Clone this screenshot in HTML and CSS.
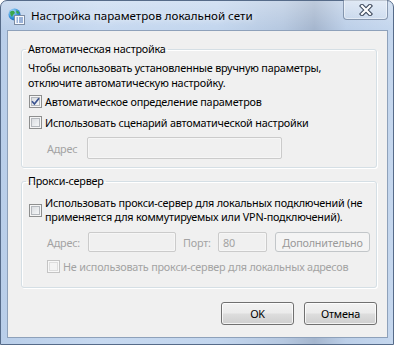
FILE: index.html
```html
<!DOCTYPE html>
<html lang="ru">
<head>
<meta charset="utf-8">
<title>Настройка параметров локальной сети</title>
<link rel="stylesheet" href="styles.css">
</head>
<body>
<div class="window">
  <div class="titlebar">
    <svg class="app-icon" width="17" height="17" viewBox="0 0 17 17">
      <defs>
        <radialGradient id="gl" cx="0.35" cy="0.3" r="0.8">
          <stop offset="0" stop-color="#bfe6ff"/>
          <stop offset="0.6" stop-color="#2f8fd8"/>
          <stop offset="1" stop-color="#1a5fa8"/>
        </radialGradient>
      </defs>
      <circle cx="6.5" cy="6.5" r="6" fill="url(#gl)"/>
      <path d="M2 4 Q4 2 6 3 L7 5 L5 7 L4 9 L2.5 7 Z" fill="#3aa64a"/>
      <path d="M8 2.5 Q10 2.5 11.5 4.5 L10 6 L8.5 5 Z" fill="#3aa64a"/>
      <rect x="6.5" y="7.5" width="10" height="9" fill="#f7f9fc" stroke="#7d8ca3"/>
      <path d="M8.5 10h1.5M11 10h4M8.5 12h1.5M11 12h4M8.5 14h1.5M11 14h4" stroke="#3d6bb3" stroke-width="1"/>
    </svg>
    <span class="title">Настройка параметров локальной сети</span>
    <div class="close">
      <svg width="14" height="12" viewBox="0 0 14 12">
        <path d="M3 2 L11 10 M11 2 L3 10" stroke="#3f4b5e" stroke-width="4.4" stroke-linecap="square"/>
        <path d="M3 2 L11 10 M11 2 L3 10" stroke="#ffffff" stroke-width="2.2" stroke-linecap="square"/>
      </svg>
    </div>
  </div>
  <div class="client">
    <fieldset class="group g1">
      <legend>Автоматическая настройка</legend>
      <p class="desc">Чтобы использовать установленные вручную параметры,<br>отключите автоматическую настройку.</p>
      <label class="check c1"><span class="box"><svg width="11" height="11" viewBox="0 0 11 11"><path d="M2 5.3 L4.4 8 L9 2.2" fill="none" stroke="#3b5390" stroke-width="1.7"/></svg></span><span>Автоматическое определение параметров</span></label>
      <label class="check c2"><span class="box"></span><span>Использовать сценарий автоматической настройки</span></label>
      <div class="addr-row"><span class="dis lbl-a1">Адрес</span><span class="input in-a1"></span></div>
    </fieldset>
    <fieldset class="group g2">
      <legend>Прокси-сервер</legend>
      <label class="check c3"><span class="box"></span><span class="two">Использовать прокси-сервер для локальных подключений (не<br>применяется для коммутируемых или VPN-подключений).</span></label>
      <div class="proxy-row">
        <span class="dis lbl-addr">Адрес:</span>
        <span class="input in-addr"></span>
        <span class="dis lbl-port">Порт:</span>
        <span class="input in-port">80</span>
        <span class="btn btn-dis">Дополнительно</span>
      </div>
      <label class="check c4 disabled"><span class="box"></span><span>Не использовать прокси-сервер для локальных адресов</span></label>
    </fieldset>
    <div class="buttons">
      <span class="btn btn-main">OK</span>
      <span class="btn btn-main">Отмена</span>
    </div>
  </div>
</div>
</body>
</html>
```

FILE: styles.css
```css
* { box-sizing: border-box; }
html, body { margin: 0; padding: 0; }
body {
  width: 394px;
  height: 345px;
  overflow: hidden;
  background: #ffffff;
  font-family: "Noto Sans", "Open Sans", sans-serif;
  font-size: 10.8px;
  letter-spacing: -0.2px;
  color: #000;
}
.window {
  width: 394px;
  height: 345px;
  border: 1px solid #566b89;
  border-radius: 7px 7px 0 0;
  padding: 0 5px 6px 6px;
  display: flex;
  flex-direction: column;
  background:
    linear-gradient(rgba(255,255,255,0.28), rgba(255,255,255,0) 28px),
    linear-gradient(to right, #b9cee9 0%, #c7d9f0 25%, #c3d6ee 55%, #b6c8e0 72%, #a5b6ce 80%, #bccfe8 88%, #c5d7ee 100%);
}
.titlebar {
  height: 29px;
  display: flex;
  align-items: center;
  padding-left: 1px;
}
.app-icon { flex: none; margin-right: 6px; margin-top: 1px; }
.title {
  font-size: 11.6px;
  letter-spacing: 0;
  color: #000;
  white-space: nowrap;
  text-shadow: 0 0 6px rgba(255,255,255,0.9);
}
.close {
  margin-left: auto;
  align-self: flex-start;
  width: 45px;
  height: 20px;
  margin-top: -1px;
  border: 1px solid rgba(70, 90, 120, 0.55);
  border-top: none;
  border-radius: 0 0 4px 4px;
  background: linear-gradient(rgba(255,255,255,0.35), rgba(255,255,255,0.12));
  box-shadow: inset 0 0 0 1px rgba(255,255,255,0.45);
  display: flex;
  align-items: center;
  justify-content: center;
}
.client {
  width: 381px;
  height: 308px;
  border: 1px solid #8ea1ba;
  background: #f0f0f0;
  padding: 11px 10px 0 13px;
  display: flex;
  flex-direction: column;
}
.group {
  margin: 0;
  padding: 0 6px;
  border: 1px solid #d5dfe5;
  border-radius: 3px;
  box-shadow: inset 1px 1px 0 #fff, 1px 1px 0 #fff;
  min-width: 0;
}
.group legend {
  margin-left: -2px;
  padding: 0 2px;
  line-height: 14px;
  height: 14px;
}
.g1 { padding-bottom: 8px; }
.g2 { margin-top: 6px; padding-bottom: 12px; }
.desc {
  margin: 4px 0 0;
  line-height: 15px;
  white-space: nowrap;
}
.check {
  display: flex;
  align-items: center;
  gap: 3px;
  line-height: 15px;
  min-height: 17px;
  white-space: nowrap;
}
.c1 { margin-top: 3px; }
.c2 { margin-top: 4px; }
.c3 { margin-top: 8px; }
.c3 .two { line-height: 14px; }
.c4 { margin-top: 6px; margin-left: 19px; color: #a3a3a3; }
.box {
  flex: none;
  width: 13px;
  height: 13px;
  margin-left: 1px;
  border: 1px solid #8e8f8f;
  background: linear-gradient(135deg, #d3d6da 0%, #eceef0 60%, #fbfbfb 100%);
  box-shadow: inset 0 0 0 1px #f5f5f5, inset 0 0 0 2px #b4b8bd;
  display: flex;
  align-items: center;
  justify-content: center;
}
.c4 .box {
  margin-left: 0;
  border-color: #c4c4c4;
  background: #f4f4f4;
  box-shadow: inset 0 0 0 1px #f8f8f8, inset 0 0 0 2px #dedede;
}
.dis { color: #a3a3a3; }
.addr-row {
  margin-top: 6px;
  display: flex;
  align-items: center;
  padding-left: 19px;
}
.lbl-a1 { width: 40px; }
.input {
  display: flex;
  align-items: center;
  border: 1px solid #cbcbcb;
  border-radius: 2px;
  background: #f0f0f0;
  box-shadow: inset 0 0 0 1px #f6f6f6;
  color: #a3a3a3;
  padding-left: 4px;
}
.in-a1 { width: 195px; height: 22px; }
.proxy-row {
  margin-top: 8px;
  display: flex;
  align-items: center;
  padding-left: 19px;
  height: 20px;
  white-space: nowrap;
}
.lbl-addr { width: 41px; }
.in-addr { width: 88px; height: 20px; }
.lbl-port { width: 35px; margin-left: 7px; }
.in-port { width: 49px; height: 20px; }
.btn {
  display: flex;
  align-items: center;
  justify-content: center;
  border-radius: 3px;
  white-space: nowrap;
}
.btn-dis {
  margin-left: 8px;
  width: 95px;
  height: 20px;
  border: 1px solid #c2c6c9;
  background: #f4f4f4;
  color: #9a9a9a;
}
.buttons {
  margin-top: 14px;
  display: flex;
  justify-content: flex-end;
  gap: 10px;
}
.btn-main {
  width: 73px;
  height: 23px;
  border: 1px solid #707070;
  background: linear-gradient(#f2f2f2 0%, #ebebeb 48%, #dddddd 52%, #cfcfcf 100%);
  box-shadow: inset 0 0 0 1px rgba(255,255,255,0.75);
}
```
